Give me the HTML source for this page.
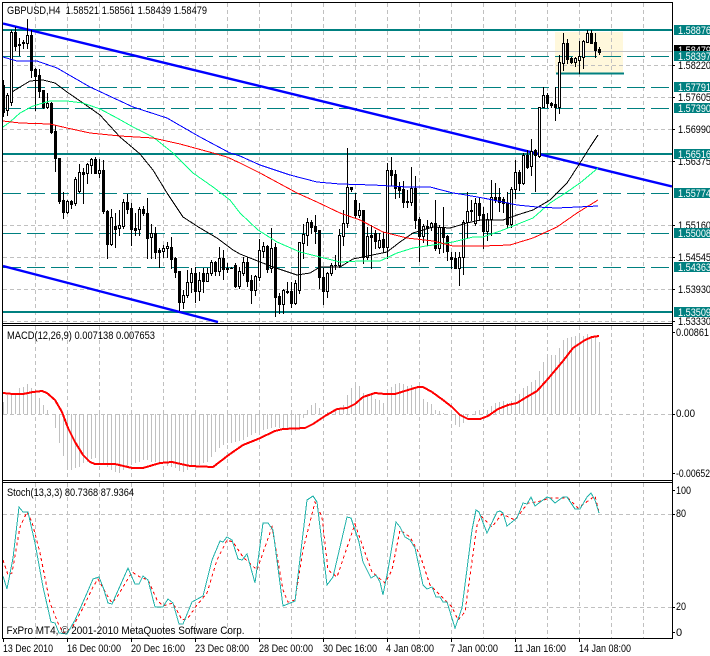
<!DOCTYPE html>
<html><head><meta charset="utf-8"><title>GBPUSD H4</title>
<style>html,body{margin:0;padding:0;background:#fff;width:710px;height:656px;overflow:hidden}svg{display:block}text{font-family:"Liberation Sans",sans-serif;font-size:11px;fill:#000}</style></head>
<body>
<svg width="710" height="656" viewBox="0 0 710 656" xmlns="http://www.w3.org/2000/svg">
<defs>
<clipPath id="m"><rect x="3" y="3" width="669" height="320"/></clipPath>
</defs>
<rect width="710" height="656" fill="#fff"/>
<!-- main chart -->
<g clip-path="url(#m)">
<rect x="555" y="32" width="68" height="41" fill="#fff8dc"/>
<g stroke="#c0c0c0" stroke-dasharray="4 3" fill="none" shape-rendering="crispEdges">
<path d="M3 65.5H672M3 97.5H672M3 129.5H672M3 161.5H672M3 225.5H672M3 257.5H672M3 289.5H672M3 321.5H672"/>
<path d="M35.5 3V323M67.5 3V323M99.5 3V323M131.5 3V323M163.5 3V323M195.5 3V323M227.5 3V323M259.5 3V323M291.5 3V323M323.5 3V323M355.5 3V323M387.5 3V323M419.5 3V323M451.5 3V323M483.5 3V323M515.5 3V323M547.5 3V323M579.5 3V323M611.5 3V323M643.5 3V323"/>
</g>
<path d="M3 51.5H672" stroke="#c0c0c0" shape-rendering="crispEdges"/>
<g fill="none" stroke="#008080" shape-rendering="crispEdges">
<path d="M3 30H672M3 154H672M3 312H672" stroke-width="2"/>
<path d="M3 56.5H672M3 87.5H672M3 108.5H672M3 193.5H672M3 233.5H672M3 267.5H672" stroke-dasharray="18 6"/>
<path d="M556 73.5H624" stroke-width="2"/>
</g>
<path d="M3 23.5L672 186.5M3 266L218 322" stroke="#0000ff" stroke-width="2.4" fill="none"/>
<g transform="translate(.5,0)" fill="none" shape-rendering="crispEdges">
<path stroke="#000" d="M3 80V117M7 93V116M11 30V106M15 27V51M19 38V56M23 40V49M27 19V49M31 30V78M35 68V111M39 69V98M43 90V109M47 93V109M51 102V134M55 125V172M59 158V204M63 192V219M67 200V214M71 200V209M75 177V206M79 164V193M83 168V204M87 163V184M91 158V174M95 157V174M99 159V178M103 160V214M107 210V259M111 209V246M115 213V248M119 210V236M123 199V229M127 194V214M131 203V246M135 213V236M139 207V236M143 206V216M147 198V259M151 224V259M155 227V259M159 248V268M163 245V258M167 242V258M171 237V269M175 257V278M179 271V311M183 290V309M187 270V298M191 268V293M195 267V303M199 272V301M203 268V293M207 268V282M211 260V276M215 261V276M219 247V276M223 250V280M227 263V273M231 267V269M235 263V288M239 267V289M243 257V276M247 257V287M251 275V304M255 275V296M259 239V281M263 242V258M267 245V273M271 228V273M275 243V317M279 293V314M283 289V314M287 282V294M291 282V308M295 280V305M299 242V294M303 224V259M307 218V246M311 220V234M315 215V244M319 230V289M323 268V305M327 272V298M331 263V276M335 255V270M339 229V268M343 210V246M347 148V228M351 187V192M355 193V218M359 203V218M363 210V264M367 227V260M371 225V269M375 230V249M379 233V249M383 232V253M387 163V259M391 157V186M395 170V199M399 182V198M403 181V208M407 190V208M411 167V206M415 176V229M419 217V262M423 224V243M427 220V246M431 222V231M435 200V251M439 225V254M443 207V253M447 235V261M451 252V269M455 252V269M459 252V286M463 220V275M467 192V238M471 200V221M475 198V226M479 197V221M483 207V249M487 213V241M491 180V236M495 183V203M499 188V212M503 197V213M507 192V228M511 187V228M515 160V199M519 170V191M523 153V185M527 150V169M531 139V176M535 149V192M539 107V158M543 87V108M547 93V108M551 102V108M555 87V121M559 55V114M563 33V71M567 39V64M571 57V64M575 57V67M579 41V74M583 40V69M587 30V43M591 30V44M595 33V58M599 47V55"/>
<path stroke="#000" stroke-width="3" d="M3 85V113M7 95V111M11 32V103M15 32V47M19 44V46M23 42V44M27 35V44M31 35V71M35 69V77M39 75V92M43 90V108M47 103V108M51 103V133M55 131V159M59 158V202M63 200V213M67 201V213M71 201V205M75 179V204M79 172V192M83 172V175M87 164V174M91 159V166M95 159V174M99 170V174M103 170V212M107 211V245M111 217V245M115 226V230M119 225V229M123 202V227M127 202V210M131 208V230M135 228V231M139 209V230M143 209V214M147 213V239M151 233V238M155 233V253M159 250V253M163 248V252M167 246V249M171 247V260M175 258V273M179 271V303M183 295V303M187 282V296M191 273V283M195 273V292M199 280V292M203 273V282M207 273V282M211 262V274M215 262V272M219 258V272M223 258V270M227 268V270M231 268V269M235 265V287M239 271V287M243 262V274M247 262V282M251 280V291M255 276V291M259 250V278M263 246V252M267 246V270M271 248V269M275 247V298M279 296V305M283 290V305M287 291V293M291 291V304M295 283V304M299 242V291M303 234V244M307 222V236M311 222V228M315 226V232M319 230V278M323 277V292M327 273V292M331 265V274M335 265V266M339 235V266M343 223V237M347 187V224M351 187V190M355 200V216M359 210V216M363 210V258M367 236V258M371 235V238M375 233V242M379 240V248M383 239V248M387 170V248M391 170V176M395 174V189M399 187V191M403 189V203M407 201V203M411 188V203M415 188V221M419 219V237M423 226V237M427 226V229M431 223V228M435 223V249M439 227V249M443 227V238M447 236V252M451 257V260M455 258V269M459 257V269M463 222V258M467 211V223M471 210V212M475 203V224M479 203V216M483 214V232M487 219V232M491 197V220M495 197V200M499 197V203M503 199V204M507 203V225M511 189V225M515 172V190M519 172V184M523 155V184M527 155V168M531 151V167M535 150V156M539 107V157M543 95V108M547 95V104M551 103V106M555 104V108M559 62V108M563 43V64M567 43V60M571 58V63M575 58V63M579 56V61M583 41V58M587 33V43M591 33V44M595 42V51M599 49V53"/>
<path stroke="#fff" d="M7 96V110M11 33V102M27 36V43M47 104V107M67 202V212M75 180V203M79 173V191M87 165V173M91 160V165M99 171V173M111 218V244M119 226V228M123 203V226M139 210V229M151 234V237M163 249V251M167 247V248M183 296V302M187 283V295M191 274V282M199 281V291M207 274V281M211 263V273M219 259V271M239 272V286M243 263V273M255 277V290M259 251V277M263 247V251M271 249V268M283 291V304M295 284V303M299 243V290M303 235V243M307 223V235M327 274V291M331 266V273M339 236V265M343 224V236M347 188V223M359 211V215M367 237V257M379 241V247M387 171V247M411 189V202M423 227V236M431 224V227M439 228V248M459 258V268M463 223V257M467 212V222M475 204V223M487 220V231M491 198V219M511 190V224M515 173V189M523 156V183M531 152V166M539 108V156M543 96V107M559 63V107M563 44V63M575 59V62M579 57V60M583 42V57M587 34V42"/>
</g>
<g fill="none" shape-rendering="crispEdges">
<polyline stroke="#000" points="12,92 20,87 30,81 43,80 55,83 67,92 83,103 100,115 120,137 140,154 153,170 167,193 183,217 200,228 217,238 233,250 240,254 250,258 273,267 297,275 310,273 320,267 340,267 353,259 387,252 400,242 413,233 433,227 450,228 467,223 480,220 503,220 517,215 533,210 550,200 567,183 580,163 590,147 598,135"/>
<polyline stroke="#00ff7f" points="3,127 10,122 20,113 33,106 50,101 67,101 83,103 100,109 117,118 133,127 153,137 173,153 193,173 213,187 230,200 240,213 258,230 277,242 300,252 320,257 340,262 360,261 380,261 397,253 413,248 433,245 453,242 473,237 483,237 503,230 533,218 550,203 567,192 580,183 598,168"/>
<polyline stroke="#ff0000" points="3,121 20,123 50,124 67,128 90,133 120,136 153,138 180,144 213,153 227,157 240,163 260,173 297,193 317,202 340,213 360,220 383,232 407,238 433,241 453,246 483,246 510,245 533,238 557,227 577,213 598,200"/>
<polyline stroke="#0000ff" points="3,57 17,61 37,61 57,68 90,87 133,107 167,118 200,137 230,153 240,156 260,165 290,175 317,182 340,184 373,185 407,187 430,187 453,193 460,194 483,198 503,202 517,205 537,207 557,208 598,206"/>
</g>
</g>
<!-- MACD -->
<g stroke="#c0c0c0" stroke-dasharray="4 3" fill="none" shape-rendering="crispEdges">
<path d="M3 414.5H672"/>
<path d="M35.5 326V480M67.5 326V480M99.5 326V480M131.5 326V480M163.5 326V480M195.5 326V480M227.5 326V480M259.5 326V480M291.5 326V480M323.5 326V480M355.5 326V480M387.5 326V480M419.5 326V480M451.5 326V480M483.5 326V480M515.5 326V480M547.5 326V480M579.5 326V480M611.5 326V480M643.5 326V480"/>
<path d="M35.5 483V638M67.5 483V638M99.5 483V638M131.5 483V638M163.5 483V638M195.5 483V638M227.5 483V638M259.5 483V638M291.5 483V638M323.5 483V638M355.5 483V638M387.5 483V638M419.5 483V638M451.5 483V638M483.5 483V638M515.5 483V638M547.5 483V638M579.5 483V638M611.5 483V638M643.5 483V638"/>
<path d="M3 514.5H672M3 607.5H672"/>
</g>
<path transform="translate(.5,0)" stroke="#c0c0c0" fill="none" shape-rendering="crispEdges" d="M3 402V414M7 395V414M11 395V414M15 393V414M19 388V414M23 387V414M27 384V414M31 388V414M35 392V414M39 398V414M43 405V414M47 410V414M55 414V428M59 414V443M63 414V456M67 414V469M71 414V470M75 414V468M79 414V467M83 414V463M87 414V462M91 414V459M95 414V458M99 414V460M103 414V463M107 414V467M111 414V470M115 414V472M119 414V473M123 414V470M127 414V468M131 414V465M135 414V463M139 414V462M143 414V460M147 414V460M151 414V462M155 414V462M159 414V463M163 414V463M167 414V466M171 414V467M175 414V468M179 414V471M183 414V472M187 414V470M191 414V467M195 414V467M199 414V465M203 414V463M207 414V462M211 414V457M215 414V452M219 414V448M223 414V445M227 414V443M231 414V443M235 414V442M239 414V441M243 414V440M247 414V437M251 414V435M255 414V433M259 414V432M263 414V430M267 414V429M271 414V428M275 414V427M279 414V428M283 414V428M287 414V430M291 414V432M295 414V431M299 414V430M303 414V418M307 410V414M311 405V414M315 403V414M319 408V414M323 413V414M327 412V414M331 411V414M335 410V414M339 409V414M343 405V414M347 395V414M351 388V414M355 386V414M359 386V414M363 393V414M367 394V414M371 395V414M375 399V414M379 400V414M383 403V414M387 390V414M391 387V414M395 384V414M399 383V414M403 384V414M407 386V414M411 385V414M415 387V414M419 387V414M423 399V414M427 402V414M431 404V414M435 410V414M439 411V414M443 413V414M451 414V420M455 414V425M459 414V427M463 414V423M467 414V417M475 411V414M479 410V414M483 409V414M487 410V414M491 406V414M495 403V414M499 402V414M503 401V414M507 403V414M511 401V414M515 400V414M519 394V414M523 388V414M527 386V414M531 382V414M535 380V414M539 371V414M543 362V414M547 356V414M551 355V414M555 355V414M559 348V414M563 340V414M567 338V414M571 337V414M575 336V414M579 337V414M583 336V414M587 334V414M591 336V414M595 337V414M599 342V414"/>
<polyline fill="none" stroke="#ff0000" stroke-width="2" shape-rendering="crispEdges" points="3,393 13,394 23,394 33,392 42,391 47,393 55,400 62,412 68,428 75,442 83,455 90,462 95,464 115,464 132,468 143,468 160,463 172,462 190,466 213,467 230,454 243,445 258,439 275,431 283,429 305,428 313,424 325,416 337,409 347,408 355,404 363,397 375,393 385,394 395,394 408,390 418,387 423,387 432,392 443,400 452,407 460,415 468,419 480,419 488,416 498,409 508,405 517,403 525,398 537,391 547,380 563,361 573,348 585,340 592,337 599,336"/>
<!-- Stoch -->
<polyline fill="none" stroke="#ff0000" stroke-dasharray="3 3" shape-rendering="crispEdges" points="3,560 8,575 12,573 20,527 27,512 32,522 40,553 50,603 58,623 63,633 72,628 83,608 93,587 98,579 107,595 112,603 117,597 132,572 140,577 148,580 157,600 163,606 173,603 182,620 188,618 197,605 207,593 217,560 227,540 233,542 243,557 257,570 272,527 283,590 288,602 295,600 303,550 315,502 322,517 328,570 337,577 355,524 363,547 372,572 385,583 392,570 400,530 410,537 420,555 430,585 442,597 452,607 458,620 465,612 477,525 481,516 492,527 502,514 515,520 528,503 537,502 550,498 568,498 578,508 595,496 599,512"/>
<polyline fill="none" stroke="#20b2aa" shape-rendering="crispEdges" points="3,576 7,589 13,558 19,507 23,512 28,512 35,543 43,587 51,622 55,623 59,633 67,634 75,620 87,593 93,579 99,577 103,587 108,603 112,604 128,568 135,584 139,584 143,576 148,580 155,607 163,607 168,599 173,603 179,624 183,624 192,602 203,596 212,560 220,541 223,542 227,537 232,540 238,559 242,560 247,554 255,583 263,523 268,523 273,530 283,606 295,601 307,500 313,496 317,502 327,585 333,577 347,517 351,518 355,530 359,542 363,562 371,578 376,575 380,582 383,595 388,570 396,522 400,527 405,537 410,540 415,548 423,585 427,589 432,587 436,597 440,597 443,602 447,602 455,628 462,608 472,530 476,510 479,512 487,533 497,512 500,511 503,513 507,526 517,518 523,503 527,504 531,497 535,506 547,497 550,498 555,503 563,497 567,497 575,509 580,509 587,497 591,493 595,500 599,513"/>
<!-- frames -->
<g stroke="#000" fill="none" shape-rendering="crispEdges">
<path d="M2.5 2.5H672.5V638.5H2.5ZM2.5 323.5H672.5M2.5 325.5H672.5M2.5 480.5H672.5M2.5 482.5H672.5"/>
<path d="M672 65.5h3M672 97.5h3M672 129.5h3M672 161.5h3M672 225.5h3M672 257.5h3M672 289.5h3M672 321.5h3M672 332.5h3M672 414.5h3M672 473.5h3M672 490.5h3M672 514.5h3M672 607.5h3M672 632.5h3"/>
<path d="M3.5 638v4M67.5 638v4M131.5 638v4M195.5 638v4M259.5 638v4M323.5 638v4M387.5 638v4M451.5 638v4M515.5 638v4M579.5 638v4"/>
</g>
<!-- axis labels -->
<g>
<text x="678" y="69" textLength="33" lengthAdjust="spacingAndGlyphs">1.58220</text>
<text x="678" y="101" textLength="33" lengthAdjust="spacingAndGlyphs">1.57605</text>
<text x="678" y="133" textLength="33" lengthAdjust="spacingAndGlyphs">1.56990</text>
<text x="678" y="165" textLength="33" lengthAdjust="spacingAndGlyphs">1.56375</text>
<text x="678" y="229" textLength="33" lengthAdjust="spacingAndGlyphs">1.55160</text>
<text x="678" y="261" textLength="33" lengthAdjust="spacingAndGlyphs">1.54545</text>
<text x="678" y="293" textLength="33" lengthAdjust="spacingAndGlyphs">1.53930</text>
<text x="678" y="325" textLength="33" lengthAdjust="spacingAndGlyphs">1.53330</text>
<rect x="674" y="45" width="36" height="7" fill="#000"/>
<text x="678" y="54" textLength="33" lengthAdjust="spacingAndGlyphs" style="fill:#fff">1.58479</text>
<g fill="#008080" shape-rendering="crispEdges">
<rect x="674" y="25" width="36" height="10"/><rect x="674" y="51" width="36" height="10"/><rect x="674" y="82" width="36" height="10"/><rect x="674" y="103" width="36" height="10"/><rect x="674" y="149" width="36" height="10"/><rect x="674" y="188" width="36" height="10"/><rect x="674" y="228" width="36" height="10"/><rect x="674" y="262" width="36" height="10"/><rect x="674" y="307" width="36" height="10"/>
</g>
<g style="fill:#fff">
<text x="678" y="34" textLength="33" lengthAdjust="spacingAndGlyphs" style="fill:#fff">1.58876</text>
<text x="678" y="60" textLength="33" lengthAdjust="spacingAndGlyphs" style="fill:#fff">1.58397</text>
<text x="678" y="91" textLength="33" lengthAdjust="spacingAndGlyphs" style="fill:#fff">1.57791</text>
<text x="678" y="112" textLength="33" lengthAdjust="spacingAndGlyphs" style="fill:#fff">1.57390</text>
<text x="678" y="158" textLength="33" lengthAdjust="spacingAndGlyphs" style="fill:#fff">1.56516</text>
<text x="678" y="197" textLength="33" lengthAdjust="spacingAndGlyphs" style="fill:#fff">1.55774</text>
<text x="678" y="237" textLength="33" lengthAdjust="spacingAndGlyphs" style="fill:#fff">1.55008</text>
<text x="678" y="271" textLength="33" lengthAdjust="spacingAndGlyphs" style="fill:#fff">1.54363</text>
<text x="678" y="316" textLength="33" lengthAdjust="spacingAndGlyphs" style="fill:#fff">1.53509</text>
</g>
<text x="676" y="336" textLength="33" lengthAdjust="spacingAndGlyphs">0.00861</text>
<text x="676" y="417" textLength="19" lengthAdjust="spacingAndGlyphs">0.00</text>
<text x="676" y="477" textLength="34" lengthAdjust="spacingAndGlyphs">-0.00652</text>
<text x="676" y="494" textLength="15" lengthAdjust="spacingAndGlyphs">100</text>
<text x="676" y="517" textLength="10" lengthAdjust="spacingAndGlyphs">80</text>
<text x="676" y="610" textLength="10" lengthAdjust="spacingAndGlyphs">20</text>
<text x="676" y="636" textLength="5">0</text>
<text x="7" y="14" xml:space="preserve" textLength="200" lengthAdjust="spacingAndGlyphs">GBPUSD,H4  1.58521 1.58561 1.58439 1.58479</text>
<text x="7" y="339" textLength="148" lengthAdjust="spacingAndGlyphs">MACD(12,26,9) 0.007138 0.007653</text>
<text x="7" y="496" textLength="127" lengthAdjust="spacingAndGlyphs">Stoch(13,3,3) 80.7368 87.9364</text>
<text x="6.5" y="634" textLength="238" lengthAdjust="spacingAndGlyphs">FxPro MT4, © 2001-2010 MetaQuotes Software Corp.</text>
<text x="3" y="652" textLength="50" lengthAdjust="spacingAndGlyphs">13 Dec 2010</text>
<text x="67" y="652" textLength="54" lengthAdjust="spacingAndGlyphs">16 Dec 00:00</text>
<text x="131" y="652" textLength="54" lengthAdjust="spacingAndGlyphs">20 Dec 16:00</text>
<text x="195" y="652" textLength="54" lengthAdjust="spacingAndGlyphs">23 Dec 08:00</text>
<text x="259" y="652" textLength="54" lengthAdjust="spacingAndGlyphs">28 Dec 00:00</text>
<text x="323" y="652" textLength="54" lengthAdjust="spacingAndGlyphs">30 Dec 16:00</text>
<text x="386" y="652" textLength="48" lengthAdjust="spacingAndGlyphs">4 Jan 08:00</text>
<text x="450" y="652" textLength="48" lengthAdjust="spacingAndGlyphs">7 Jan 00:00</text>
<text x="514" y="652" textLength="52" lengthAdjust="spacingAndGlyphs">11 Jan 16:00</text>
<text x="579" y="652" textLength="52" lengthAdjust="spacingAndGlyphs">14 Jan 08:00</text>
</g>
</svg>
</body></html>
